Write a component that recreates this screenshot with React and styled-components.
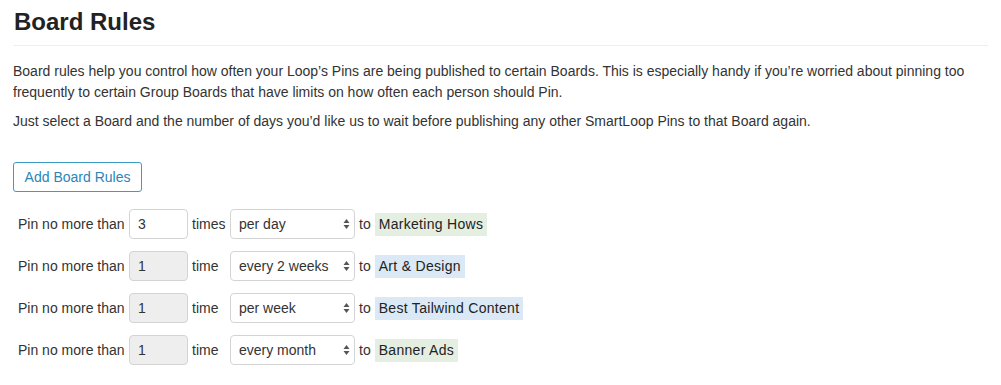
import React from 'react';
import styled, { createGlobalStyle } from 'styled-components';

const GlobalStyle = createGlobalStyle`
	body {
		margin: 0;
		background: #fff;
		color: #333;
		font-family: "Liberation Sans", Arial, sans-serif;
		font-size: 14px;
	}
`

const Page = styled.div`
	padding: 0 13px;
`

const Title = styled.h2`
	margin: 0;
	padding: 7px 0 9px 1px;
	font-size: 24px;
	line-height: 29px;
	font-weight: 700;
	color: #222;
	border-bottom: 1px solid #eee;
`

const Text = styled.p`
	margin: ${props => props.first ? '15px' : '8px'} 0 0;
	line-height: 21px;
	color: #333;
`

const AddButton = styled.button`
	margin-top: 30px;
	width: 129px;
	height: 30px;
	background: #fff;
	border: 1px solid #3b9cc6;
	border-radius: 3px;
	color: #2a86b8;
	font-family: inherit;
	font-size: 14px;
	cursor: pointer;
`

const Rules = styled.div`
	display: flex;
	flex-direction: column;
	gap: 12px;
	margin-top: 17px;
	padding-left: 5px;
`

const Row = styled.div`
	display: flex;
	align-items: center;
	height: 30px;
`

const Label = styled.span`
	width: ${props => props.width || 'auto'};
`

const Count = styled.input`
	box-sizing: border-box;
	width: 59px;
	height: 30px;
	margin-right: 4px;
	padding: 0 8px;
	border: 1px solid #d4d4d4;
	border-radius: 4px;
	background: ${props => props.disabled ? '#eee' : '#fff'};
	color: #333;
	font-family: inherit;
	font-size: 14px;
`

const SelectHolder = styled.div`
	position: relative;
	margin-right: 4px;
`

const Select = styled.select`
	box-sizing: border-box;
	width: 125px;
	height: 30px;
	padding: 0 20px 0 8px;
	border: 1px solid #d4d4d4;
	border-radius: 4px;
	background: #fff;
	color: #333;
	font-family: inherit;
	font-size: 14px;
	appearance: none;
	-webkit-appearance: none;
`

const Arrows = styled.svg`
	position: absolute;
	right: 5px;
	top: 9px;
	pointer-events: none;
`

const Board = styled.span`
	margin-left: 4px;
	padding: 4px 4px 5px;
	background: ${props => props.tone === 'blue' ? '#dae9f5' : '#e4efe2'};
	color: #222;
	line-height: 14px;
	letter-spacing: 0.3px;
`

const periods = ['per day', 'per week', 'every 2 weeks', 'every month'];

const rules = [
	{ count: 3, unit: 'times', period: 'per day', board: 'Marketing Hows', tone: 'green', editable: true },
	{ count: 1, unit: 'time', period: 'every 2 weeks', board: 'Art & Design', tone: 'blue' },
	{ count: 1, unit: 'time', period: 'per week', board: 'Best Tailwind Content', tone: 'blue' },
	{ count: 1, unit: 'time', period: 'every month', board: 'Banner Ads', tone: 'green' }
];

const App = () => (
	<Page>
		<GlobalStyle />
		<Title>Board Rules</Title>
		<Text first>
			Board rules help you control how often your Loop’s Pins are being published to certain Boards. This is especially handy if you’re worried about pinning too frequently to certain Group Boards that have limits on how often each person should Pin.
		</Text>
		<Text>
			Just select a Board and the number of days you’d like us to wait before publishing any other SmartLoop Pins to that Board again.
		</Text>
		<AddButton>Add Board Rules</AddButton>
		<Rules>
			{rules.map((rule, i) => (
				<Row key={i}>
					<Label width="111px">Pin no more than</Label>
					<Count defaultValue={rule.count} disabled={!rule.editable} />
					<Label width="38px">{rule.unit}</Label>
					<SelectHolder>
						<Select defaultValue={rule.period}>
							{periods.map(p => <option key={p}>{p}</option>)}
						</Select>
						<Arrows width="7" height="12" viewBox="0 0 7 12">
							<path d="M3.5 1 L6.5 5 H0.5 Z M3.5 11 L6.5 7 H0.5 Z" fill="#555" />
						</Arrows>
					</SelectHolder>
					<Label>to</Label>
					<Board tone={rule.tone}>{rule.board}</Board>
				</Row>
			))}
		</Rules>
	</Page>
);

export default App;
